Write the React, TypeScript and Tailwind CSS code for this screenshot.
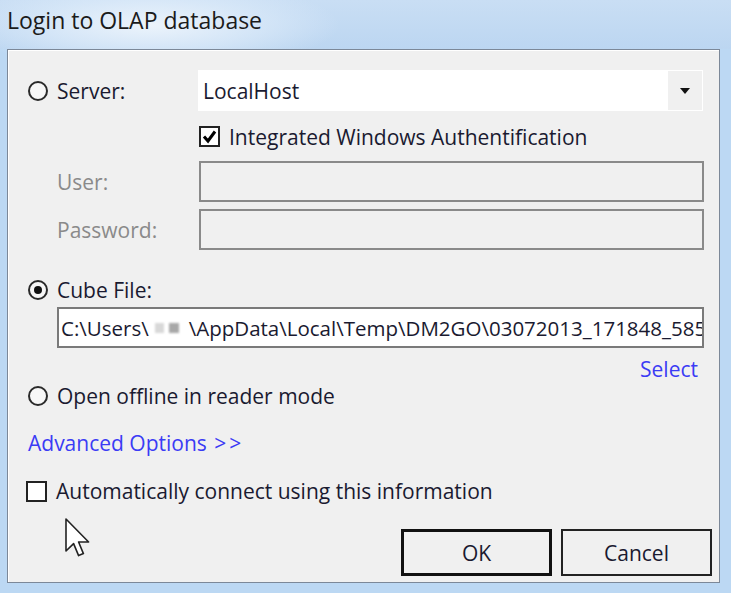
import React from "react";

const font = { fontFamily: '"Open Sans", "Noto Sans", Arial, sans-serif' };

function Radio({ checked }: { checked?: boolean }) {
  return (
    <div className="w-[20px] h-[20px] rounded-full border-[2px] border-[#2a2a2a] bg-[#f7f7f7] flex items-center justify-center shrink-0">
      {checked && <div className="w-[8px] h-[8px] rounded-full bg-[#111]" />}
    </div>
  );
}

function Check({ checked }: { checked?: boolean }) {
  return (
    <div className="w-[21px] h-[21px] border-[2px] border-[#222] bg-white flex items-center justify-center shrink-0">
      {checked && (
        <svg width="15" height="15" viewBox="0 0 15 15">
          <path d="M2 7.5 L6 12 L13 2.5" fill="none" stroke="#000" strokeWidth="3" strokeLinejoin="miter" />
        </svg>
      )}
    </div>
  );
}

export default function App() {
  return (
    <div
      className="w-[731px] h-[593px] flex flex-col relative overflow-hidden bg-[#bcd8f3]"
      style={font}
    >
      <div className="h-[49px] shrink-0 relative bg-[linear-gradient(180deg,#c9def4_0%,#bcd6f1_100%)]">
        <div className="absolute left-[-40px] top-[-20px] w-[380px] h-[90px] rounded-full bg-[radial-gradient(closest-side,rgba(238,245,252,0.95),rgba(222,236,250,0.6)_60%,rgba(200,222,245,0)_100%)]" />
        <div className="relative pl-[7px] pt-[5px] text-[23px] leading-[30px] text-[#1b1b1b]">
          Login to OLAP database
        </div>
      </div>
      <div className="ml-[7px] mr-[11px] mb-[10px] flex-1 border border-[#7c8898] shadow-[inset_1px_1px_0_#fff] bg-[#f0f0f0] flex flex-col relative text-[21px] leading-[24px] text-[#1a1a30]">
        {/* Server */}
        <div className="mt-[20px] h-[41px] flex items-center">
          <div className="ml-[20px]"><Radio /></div>
          <div className="ml-[9px] w-[141px]">Server:</div>
          <div className="w-[505px] h-[41px] bg-white flex items-center">
            <div className="flex-1 pl-[5px]">LocalHost</div>
            <div className="w-[34px] h-[39px] bg-[#f0f0f0] flex items-center justify-center mr-[1px]">
              <svg width="10" height="6" viewBox="0 0 10 6"><path d="M0 0 H10 L5 6 Z" fill="#111" /></svg>
            </div>
          </div>
        </div>
        {/* Integrated */}
        <div className="mt-[15px] h-[21px] flex items-center">
          <div className="ml-[191px]"><Check checked /></div>
          <div className="ml-[9px]">Integrated Windows Authentification</div>
        </div>
        {/* User */}
        <div className="mt-[14px] h-[41px] flex items-center">
          <div className="ml-[49px] w-[142px] text-[#8a8a8a]">User:</div>
          <div className="w-[505px] h-[41px] border-[2px] border-[#8a8a8a] bg-[#f0f0f0]" />
        </div>
        {/* Password */}
        <div className="mt-[7px] h-[41px] flex items-center">
          <div className="ml-[49px] w-[142px] text-[#8a8a8a]">Password:</div>
          <div className="w-[505px] h-[41px] border-[2px] border-[#8a8a8a] bg-[#f0f0f0]" />
        </div>
        {/* Cube file */}
        <div className="mt-[29px] h-[22px] flex items-center">
          <div className="ml-[20px]"><Radio checked /></div>
          <div className="ml-[9px]">Cube File:</div>
        </div>
        <div className="mt-[6px] ml-[49px] w-[647px] h-[41px] border-[2px] border-[#7a7a7a] bg-white flex items-center overflow-hidden whitespace-nowrap">
          <div className="pl-[2px] text-[20.5px] flex items-center">
            <span>C:\Users\</span>
            <span className="inline-flex items-center gap-[5px] w-[40px] h-[14px] pl-[6px] blur-[1px]">
              <span className="w-[9px] h-[10px] bg-[#d8d8d8]" />
              <span className="w-[10px] h-[10px] bg-[#a8a8a8]" />
            </span>
            <span>\AppData\Local\Temp\DM2GO\03072013_171848_585</span>
          </div>
        </div>
        <div className="mt-[9px] h-[24px] flex items-center justify-end pr-[21px] text-[#3b3bf5]">Select</div>
        {/* Offline */}
        <div className="mt-[4px] h-[22px] flex items-center">
          <div className="ml-[20px]"><Radio /></div>
          <div className="ml-[9px]">Open offline in reader mode</div>
        </div>
        <div className="mt-[24px] h-[24px] flex items-center ml-[20px] text-[#3b3bf5] whitespace-pre">
          Advanced Options <span className="tracking-[3px] ml-[2px]">&gt;&gt;</span>
        </div>
        {/* Auto connect */}
        <div className="mt-[25px] h-[22px] flex items-center">
          <div className="ml-[18px]"><Check /></div>
          <div className="ml-[9px]">Automatically connect using this information</div>
        </div>
        <div className="mt-[27px] flex justify-end gap-[9px] pr-[7px]">
          <button className="w-[151px] h-[47px] border-[3px] border-[#111] bg-[#f0f0f0] text-[#1a1a30]">OK</button>
          <button className="w-[151px] h-[47px] border-[2px] border-[#222] bg-[#f0f0f0] text-[#1a1a30]">Cancel</button>
        </div>
        <svg className="absolute left-[57px] top-[468px]" width="26" height="40" viewBox="0 0 13 20">
          <path d="M0.5 0.5 L0.5 16.5 L4.3 12.8 L6.8 18.8 L9.2 17.8 L6.8 12 L11.8 12 Z" fill="#fff" stroke="#222" strokeWidth="0.8" strokeLinejoin="round" />
        </svg>
      </div>
    </div>
  );
}
